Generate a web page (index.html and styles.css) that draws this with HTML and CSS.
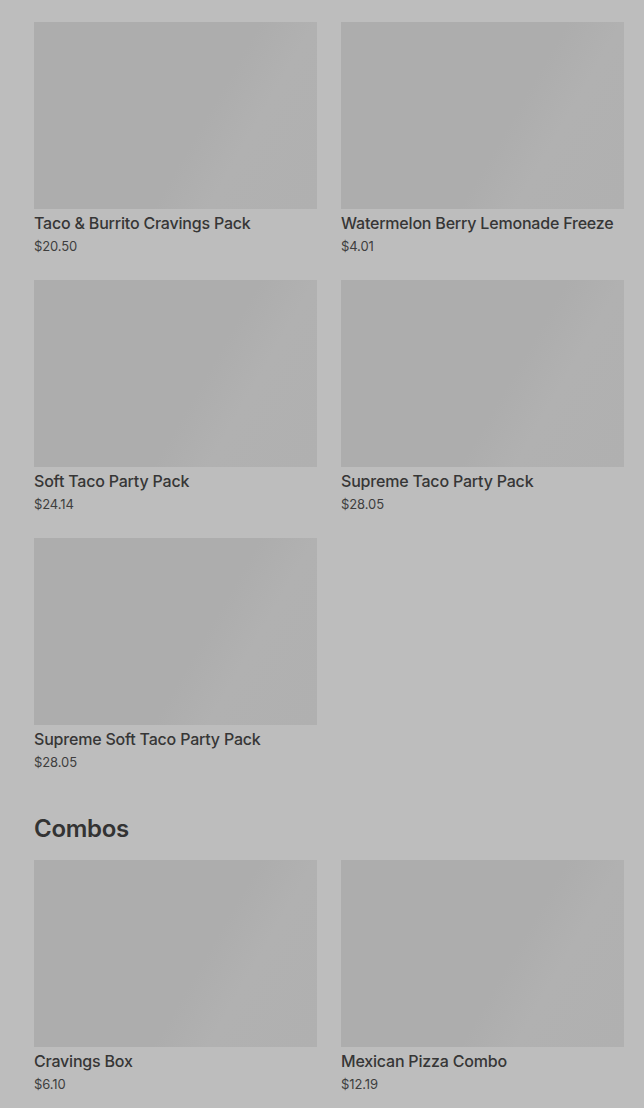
FILE: index.html
```html
<!DOCTYPE html>
<html>
<head>
<meta charset="utf-8">
<link rel="stylesheet" href="styles.css">
</head>
<body>
<main class="page">
  <section class="grid">
    <div class="card"><div class="thumb"></div><div class="title">Taco &amp; Burrito Cravings Pack</div><div class="price">$20.50</div></div>
    <div class="card"><div class="thumb"></div><div class="title">Watermelon Berry Lemonade Freeze</div><div class="price">$4.01</div></div>
    <div class="card"><div class="thumb"></div><div class="title">Soft Taco Party Pack</div><div class="price">$24.14</div></div>
    <div class="card"><div class="thumb"></div><div class="title">Supreme Taco Party Pack</div><div class="price">$28.05</div></div>
    <div class="card"><div class="thumb"></div><div class="title">Supreme Soft Taco Party Pack</div><div class="price">$28.05</div></div>
  </section>
  <h2 class="heading">Combos</h2>
  <section class="grid">
    <div class="card"><div class="thumb"></div><div class="title">Cravings Box</div><div class="price">$6.10</div></div>
    <div class="card"><div class="thumb"></div><div class="title">Mexican Pizza Combo</div><div class="price">$12.19</div></div>
  </section>
</main>
</body>
</html>
```
FILE: styles.css
```css
html, body {
  margin: 0;
  padding: 0;
  background: #bdbdbd;
}
body {
  font-family: Inter, "Noto Sans", sans-serif;
  color: #333333;
  overflow: hidden;
}
.page {
  padding: 22px 20px 0 34px;
}
.grid {
  display: grid;
  grid-template-columns: 283px 283px;
  column-gap: 24px;
  row-gap: 24px;
}
.card {
  display: flex;
  flex-direction: column;
}
.thumb {
  height: 187px;
  background: linear-gradient(120deg, #adadad 0%, #adadad 58%, #b1b1b1 72%, #b0b0b0 100%);
}
.title {
  margin-top: 3px;
  font-size: 16px;
  line-height: 22px;
  font-weight: 500;
  color: #363636;
  letter-spacing: -0.2px;
  white-space: nowrap;
}
.price {
  margin-top: 2px;
  font-size: 13px;
  line-height: 20px;
  color: #3e3e3e;
  letter-spacing: -0.1px;
}
.heading {
  margin: 42px 0 16px;
  font-size: 24px;
  line-height: 30px;
  font-weight: 600;
  color: #333333;
  letter-spacing: -0.3px;
}
```
